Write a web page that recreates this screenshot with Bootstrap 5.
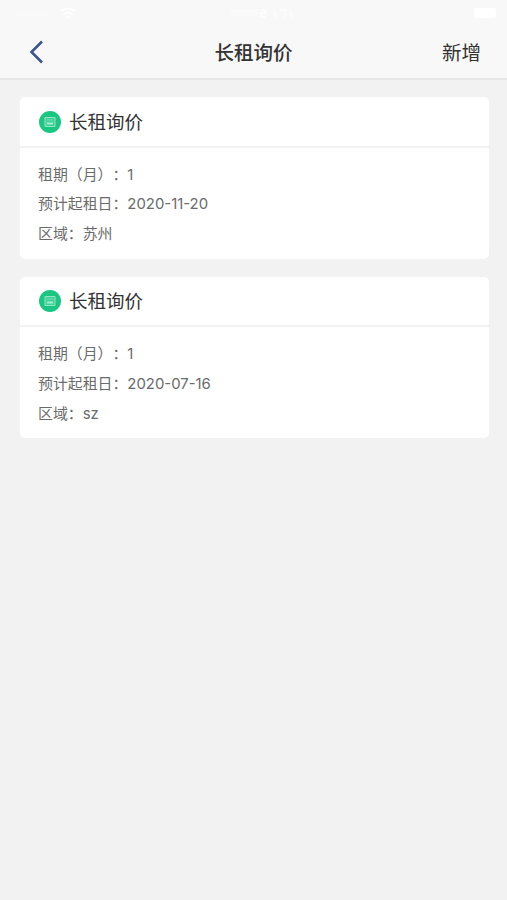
<!DOCTYPE html>
<html lang="zh-CN">
<head>
<meta charset="utf-8">
<meta name="viewport" content="width=device-width, initial-scale=1">
<title>长租询价</title>
<link href="https://cdn.jsdelivr.net/npm/bootstrap@5.3.0/dist/css/bootstrap.min.css" rel="stylesheet">
<style>
body{background:#f2f2f2;font-family:Inter,"Noto Sans CJK SC",sans-serif;min-height:100vh;color:#333;text-spacing-trim:space-all}
.app-header{background:#f8f8f8;border-bottom:2px solid #e7e7e7;height:80px}
.status{height:26px;padding:0 11px 0 17px}
.title-bar{height:53px;padding:0 26px 0 29px}
.title-bar>*{flex:1 1 0}
.back-link{padding-bottom:2px}
.page-title{font-size:19.5px;font-weight:500;line-height:28px;padding-right:3px}
.add-link{font-size:19.5px;line-height:28px;color:#333}
.quote-list{padding:17px 18px 0 20px;gap:18px}
.quote{border:0;border-radius:5px;height:161.5px}
.quote-head{height:50.5px;flex:none;border-bottom:2px solid #f2f2f2;padding:1px 19px 0;gap:8px}
.quote-name{font-size:18.5px;line-height:28px}
.quote-body{padding:13px 18px 0;font-size:14.9px;line-height:29.8px;color:#6b6b6b}
</style>
</head>
<body>
<header class="app-header">
  <div class="status d-flex justify-content-between align-items-center">
    <svg width="60" height="14" viewBox="0 0 60 14" fill="none" stroke="#fff"><path d="M0 8h34" stroke-width="5" opacity=".2"/><path d="M44 5q7-5 14 0M47 8q4-3 8 0" stroke-width="2"/><circle cx="51" cy="11" r="1.500" fill="#fff" stroke="none"/></svg>
    <svg width="72" height="14" viewBox="0 0 72 14" fill="none" stroke="#fff" stroke-width="2"><path d="M0 7h26" stroke-width="7" opacity=".3"/><path d="M30 4h4v3h-4v4h5M44 4v8M49 4h5v8M60 4v8" opacity=".6"/></svg>
    <svg width="40" height="14" viewBox="0 0 40 14"><rect x="18" y="2" width="22" height="10" rx="3" fill="#fff"/></svg>
  </div>
  <nav class="title-bar d-flex align-items-center">
    <a href="#" class="back-link d-flex" aria-label="返回"><svg width="16" height="24" viewBox="0 0 16 24" fill="none" stroke="#3f5585" stroke-width="2.6"><path d="M13 1.500 2.500 12 13 22.500"/></svg></a>
    <h1 class="page-title text-center mb-0">长租询价</h1>
    <a href="#" class="add-link text-end text-decoration-none">新增</a>
  </nav>
</header>
<main class="quote-list d-flex flex-column">
  <section class="card quote">
    <div class="quote-head d-flex align-items-center">
      <svg width="22" height="22" viewBox="0 0 22 22"><circle cx="11" cy="11" r="11" fill="#1dc582"/><path d="M6 6.500h10v9H6z" fill="#43cf98" stroke="#93e5c4"/><path d="M8 9h6" stroke="#75dcb2"/><path d="M8 12.500h6" stroke="#a6ecd0" stroke-width="2"/></svg>
      <h2 class="quote-name fw-normal m-0">长租询价</h2>
    </div>
    <div class="quote-body"><div>租期（月）：1</div><div>预计起租日：2020-11-20</div><div>区域：苏州</div></div>
  </section>
  <section class="card quote">
    <div class="quote-head d-flex align-items-center">
      <svg width="22" height="22" viewBox="0 0 22 22"><circle cx="11" cy="11" r="11" fill="#1dc582"/><path d="M6 6.500h10v9H6z" fill="#43cf98" stroke="#93e5c4"/><path d="M8 9h6" stroke="#75dcb2"/><path d="M8 12.500h6" stroke="#a6ecd0" stroke-width="2"/></svg>
      <h2 class="quote-name fw-normal m-0">长租询价</h2>
    </div>
    <div class="quote-body"><div>租期（月）：1</div><div>预计起租日：2020-07-16</div><div>区域：sz</div></div>
  </section>
</main>
<script src="https://cdn.jsdelivr.net/npm/bootstrap@5.3.0/dist/js/bootstrap.bundle.min.js"></script>
</body>
</html>
